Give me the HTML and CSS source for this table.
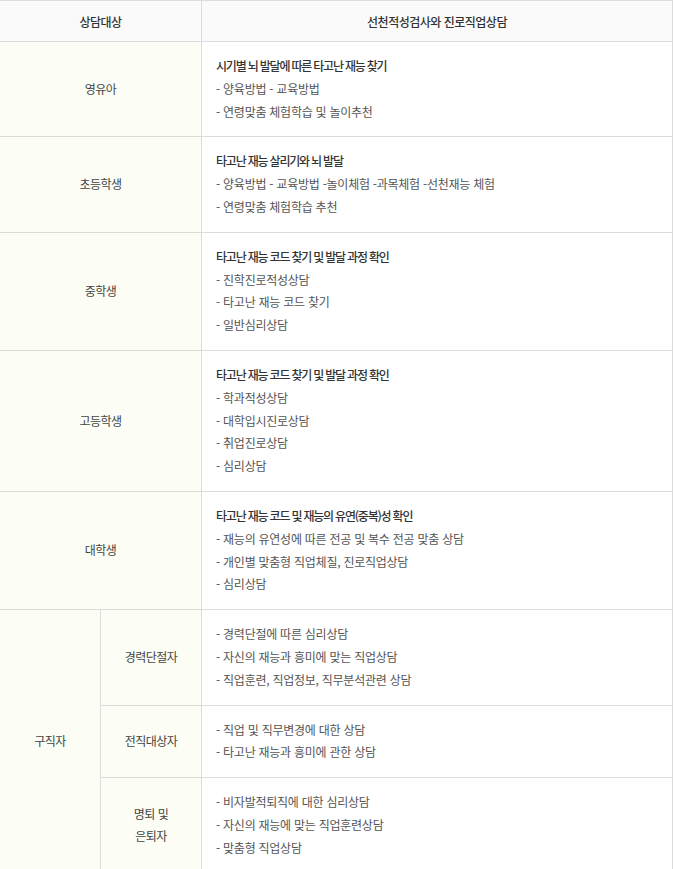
FILE: index.html
```html
<!DOCTYPE html>
<html lang="ko">
<head>
<meta charset="utf-8">
<link rel="stylesheet" href="styles.css">
</head>
<body>
<table class="tbl">
  <colgroup>
    <col class="c1"><col class="c2"><col class="c3">
  </colgroup>
  <thead>
    <tr>
      <th colspan="2">상담대상</th>
      <th>선천적성검사와 진로직업상담</th>
    </tr>
  </thead>
  <tbody>
    <tr>
      <td class="lbl" colspan="2">영유아</td>
      <td class="desc">
        <p class="ttl">시기별 뇌 발달에 따른 타고난 재능 찾기</p>
        <p>- 양육방법 - 교육방법</p>
        <p>- 연령맞춤 체험학습 및 놀이추천</p>
      </td>
    </tr>
    <tr>
      <td class="lbl" colspan="2">초등학생</td>
      <td class="desc">
        <p class="ttl">타고난 재능 살리기와 뇌 발달</p>
        <p>- 양육방법 - 교육방법 -놀이체험 -과목체험 -선천재능 체험</p>
        <p>- 연령맞춤 체험학습 추천</p>
      </td>
    </tr>
    <tr>
      <td class="lbl" colspan="2">중학생</td>
      <td class="desc">
        <p class="ttl">타고난 재능 코드 찾기 및 발달 과정 확인</p>
        <p>- 진학진로적성상담</p>
        <p>- 타고난 재능 코드 찾기</p>
        <p>- 일반심리상담</p>
      </td>
    </tr>
    <tr>
      <td class="lbl" colspan="2">고등학생</td>
      <td class="desc">
        <p class="ttl">타고난 재능 코드 찾기 및 발달 과정 확인</p>
        <p>- 학과적성상담</p>
        <p>- 대학입시진로상담</p>
        <p>- 취업진로상담</p>
        <p>- 심리상담</p>
      </td>
    </tr>
    <tr>
      <td class="lbl" colspan="2">대학생</td>
      <td class="desc">
        <p class="ttl">타고난 재능 코드 및 재능의 유연(중복)성 확인</p>
        <p>- 재능의 유연성에 따른 전공 및 복수 전공 맞춤 상담</p>
        <p>- 개인별 맞춤형 직업체질, 진로직업상담</p>
        <p>- 심리상담</p>
      </td>
    </tr>
    <tr>
      <td class="lbl" rowspan="3">구직자</td>
      <td class="lbl">경력단절자</td>
      <td class="desc">
        <p>- 경력단절에 따른 심리상담</p>
        <p>- 자신의 재능과 흥미에 맞는 직업상담</p>
        <p>- 직업훈련, 직업정보, 직무분석관련 상담</p>
      </td>
    </tr>
    <tr>
      <td class="lbl">전직대상자</td>
      <td class="desc">
        <p>- 직업 및 직무변경에 대한 상담</p>
        <p>- 타고난 재능과 흥미에 관한 상담</p>
      </td>
    </tr>
    <tr>
      <td class="lbl">명퇴 및<br>은퇴자</td>
      <td class="desc">
        <p>- 비자발적퇴직에 대한 심리상담</p>
        <p>- 자신의 재능에 맞는 직업훈련상담</p>
        <p>- 맞춤형 직업상담</p>
      </td>
    </tr>
  </tbody>
</table>
</body>
</html>
```

FILE: styles.css
```css
html, body {
  margin: 0;
  padding: 0;
  background: #fff;
}
body {
  font-family: "Noto Sans CJK KR", "Noto Sans", sans-serif;
  font-size: 12px;
  color: #555;
}
.tbl {
  width: 673px;
  table-layout: fixed;
  border-collapse: separate;
  border-spacing: 0;
  border-top: 1px solid #dcdcdc;
}
.c1 { width: 101px; }
.c2 { width: 101px; }
.c3 { width: 471px; }
.tbl th,
.tbl td {
  border-right: 1px solid #dcdcdc;
  border-bottom: 1px solid #dcdcdc;
  padding: 0;
}
.tbl th {
  height: 40px;
  background: #fafafa;
  color: #333;
  font-weight: 500;
  text-align: center;
  letter-spacing: -0.5px;
}
.lbl {
  background: #fcfef5;
  text-align: center;
  color: #444;
  line-height: 22.8px;
  letter-spacing: -0.5px;
}
.desc {
  padding: 13px 0 13px 14px !important;
  line-height: 22.8px;
  letter-spacing: -0.25px;
}
.desc p {
  margin: 0;
}
.desc .ttl {
  color: #333;
  font-weight: 500;
  letter-spacing: -1.2px;
}
```
